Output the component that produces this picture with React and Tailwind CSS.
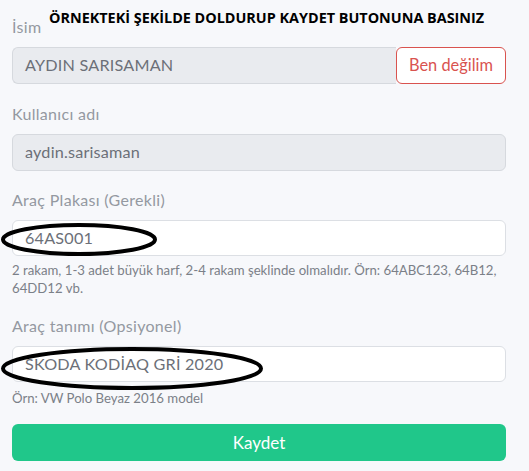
import React from 'react';

const FONT = { fontFamily: 'Lato, "Noto Sans", sans-serif' };

const Label = ({ children, className = '' }) => (
    <div className={`text-[16px] leading-6 tracking-[0.3px] text-[#9499a1] ${className}`}>{children}</div>
);

const Hint = ({ children, className = '' }) => (
    <div className={`text-[13.2px] leading-[18px] text-[#7b8088] ${className}`}>{children}</div>
);

export default function App() {
    return (
        <div className="relative min-h-[471px] w-[529px] bg-[#f7f8fb] px-3 pt-[15px]" style={FONT}>
            {/* annotation title */}
            <div
                className="absolute left-[49px] top-[8px] text-[14.4px] font-bold leading-5 text-black"
                style={{ fontFamily: '"Open Sans", "Noto Sans", sans-serif' }}
            >
                ÖRNEKTEKİ ŞEKİLDE DOLDURUP KAYDET BUTONUNA BASINIZ
            </div>

            {/* İsim */}
            <Label>İsim</Label>
            <div className="mt-2 flex h-[37px] w-[494px]">
                <div className="flex flex-1 items-center rounded-l-md border border-r-0 border-[#d6d9de] bg-[#e9ebef] px-3 text-[16.2px] tracking-[0.2px] text-[#6c7078]">
                    AYDIN SARISAMAN
                </div>
                <button className="w-[110px] rounded-md border border-[#d9534f] bg-white text-[16.4px] text-[#d9534f]">
                    Ben değilim
                </button>
            </div>

            {/* Kullanıcı adı */}
            <Label className="mt-[18px]">Kullanıcı adı</Label>
            <div className="mt-2 flex h-[37px] w-[494px] items-center rounded-md border border-[#d6d9de] bg-[#e9ebef] px-3 text-[16.2px] tracking-[0.2px] text-[#6c7078]">
                aydin.sarisaman
            </div>

            {/* Araç Plakası */}
            <Label className="mt-[17px]">Araç Plakası (Gerekli)</Label>
            <div className="mt-2 flex h-[36px] w-[494px] items-center rounded-md border border-[#dcdfe4] bg-white px-3 text-[16.2px] tracking-[0.2px] text-[#6c7078]">
                64AS001
            </div>
            <Hint className="mt-[5px]">
                2 rakam, 1-3 adet büyük harf, 2-4 rakam şeklinde olmalıdır. Örn: 64ABC123, 64B12, 64DD12 vb.
            </Hint>

            {/* Araç tanımı */}
            <Label className="mt-[17px]">Araç tanımı (Opsiyonel)</Label>
            <div className="mt-2 flex h-[36px] w-[494px] items-center rounded-md border border-[#dcdfe4] bg-white px-3 text-[16.2px] tracking-[0.2px] text-[#6c7078]">
                SKODA KODİAQ GRİ 2020
            </div>
            <Hint className="mt-[7px]">Örn: VW Polo Beyaz 2016 model</Hint>

            <button className="mt-[17px] h-[37px] w-[494px] rounded-md bg-[#20c78a] text-[17px] text-white">
                Kaydet
            </button>

            {/* hand-drawn marks */}
            <svg className="pointer-events-none absolute left-0 top-0" width="529" height="471">
                <ellipse cx="79" cy="239.5" rx="76" ry="14.5" fill="none" stroke="#000" strokeWidth="4" />
                <ellipse cx="132" cy="368.5" rx="129" ry="19.5" fill="none" stroke="#000" strokeWidth="4" />
            </svg>
        </div>
    );
}
